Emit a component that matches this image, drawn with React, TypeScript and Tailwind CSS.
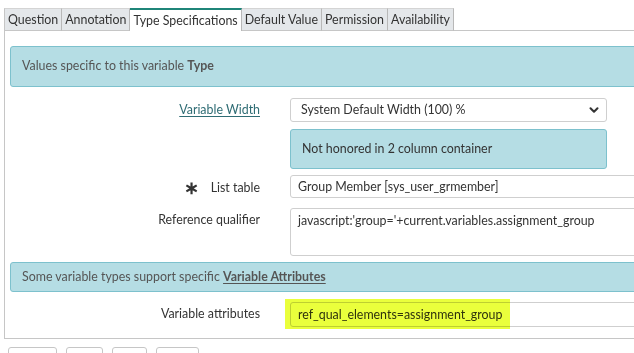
import { ChevronDown } from "lucide-react";

const TABS = ["Question", "Annotation", "Type Specifications", "Default Value", "Permission", "Availability"];
const ACTIVE = "Type Specifications";

const inputCls = "h-[23px] rounded-[3px] border border-[#cfcfcf] bg-white px-[7px] text-[12.4px] leading-[21px] text-[#333]";

function Label({ children, className = "" }: { children: React.ReactNode; className?: string }) {
  return <div className={`w-[250px] shrink-0 text-right text-[12.4px] text-[#333] ${className}`}>{children}</div>;
}

export default function App() {
  return (
    <div className="h-[353px] w-[634px] overflow-hidden bg-white font-['Lato','Liberation_Sans',sans-serif]">
      {/* tabs */}
      <div className="ml-[4px] mt-[8px] flex">
        {TABS.map((t) => {
          const active = t === ACTIVE;
          return (
            <div
              key={t}
              className={`h-[23px] border-r border-[#b8b8b8] px-[3px] text-[12.4px] leading-[21px] text-[#333] ${
                active ? "border-t-2 border-t-[#1f8579] bg-white" : "border-t border-t-[#d4d4d4] border-b border-b-[#c6c6c6] bg-[#e4e7ea]"
              } ${t === "Question" ? "border-l border-l-[#c6c6c6]" : ""}`}
            >
              {t}
            </div>
          );
        })}
        <div className="flex-1 border-b border-[#c6c6c6]" />
      </div>

      {/* panel */}
      <div className="ml-[4px] h-[308px] w-[700px] border-b border-l border-[#c6c6c6] pl-[5px] pt-[15px]">
        <div className="flex h-[41px] items-center rounded-[3px] border border-[#7dc1cd] bg-[#b5dde4] pl-[11px] text-[12.4px] text-[#555]">
          Values specific to this variable&nbsp;<b className="font-bold">Type</b>
        </div>

        <div className="mt-[11px] flex items-center">
          <Label>
            <span className="text-[#2f6c74] underline underline-offset-2">Variable Width</span>
          </Label>
          <div className="ml-[30px] flex h-[24px] w-[317px] items-center justify-between rounded-[3px] border border-[#cfcfcf] bg-white pl-[10px] pr-[5px] text-[12.4px] text-[#333]">
            <span>System Default Width (100) %</span>
            <ChevronDown size={14} strokeWidth={3.5} className="text-[#333]" />
          </div>
        </div>

        <div className="ml-[280px] mt-[7px] flex h-[40px] w-[317px] items-center rounded-[3px] border border-[#7dc1cd] bg-[#b5dde4] pl-[11px] text-[12.4px] text-[#333]">
          Not honored in 2 column container
        </div>

        <div className="mt-[6px] flex items-center">
          <Label>
            <span className="mr-[12px] inline-block translate-y-[2px] text-[18px] font-bold leading-none text-[#333]">∗</span>
            List table
          </Label>
          <div className={`ml-[30px] w-[400px] ${inputCls}`}>Group Member [sys_user_grmember]</div>
        </div>

        <div className="mt-[10px] flex items-start">
          <Label className="pt-[3px]">Reference qualifier</Label>
          <div className={`ml-[30px] h-[48px] w-[400px] ${inputCls} pt-[1px]`}>
            javascript:'group='+current.variables.assignment_group
          </div>
        </div>

        <div className="mt-[6px] flex h-[30px] items-center rounded-[3px] border border-[#7dc1cd] bg-[#b5dde4] pl-[11px] text-[12.4px] text-[#555]">
          Some variable types support specific&nbsp;
          <b className="font-bold underline underline-offset-2">Variable Attributes</b>
        </div>

        <div className="mt-[10px] flex items-center">
          <Label>Variable attributes</Label>
          <div className="relative ml-[30px]">
            <div className={`w-[400px] ${inputCls} h-[25px] leading-[23px]`}>ref_qual_elements=assignment_group</div>
            <div className="absolute left-[-5px] top-[-3px] h-[30px] w-[225px] bg-[#eaff3c] mix-blend-multiply" />
          </div>
        </div>
      </div>

      {/* buttons */}
      <div className="ml-[8px] mt-[8px] flex gap-[9px]">
        {[49, 37, 35, 43].map((w, i) => (
          <div key={i} className="h-[24px] rounded-[3px] border border-[#c6c6c6] bg-white" style={{ width: w }} />
        ))}
      </div>
    </div>
  );
}
